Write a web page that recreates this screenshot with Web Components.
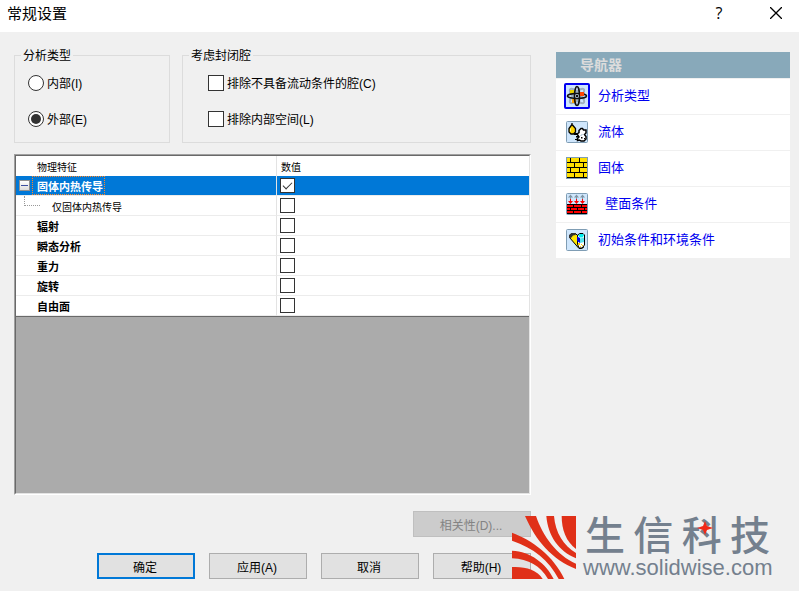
<!DOCTYPE html>
<html lang="zh-CN">
<head>
<meta charset="utf-8">
<title>常规设置</title>
<style>
    body {
        margin: 0;
        background: #f0f0f0;
        color: #000;
        font: 12px/16px "Liberation Sans", "Noto Sans CJK SC", sans-serif;
    }
</style>
</head>
<body>
<settings-dialog>
    <title-bar slot="title">常规设置</title-bar>
    <group-box slot="groups" label="分析类型">
        <choice-item type="radio" name="analysis" value="internal">内部(I)</choice-item>
        <choice-item type="radio" name="analysis" value="external" checked>外部(E)</choice-item>
    </group-box>
    <group-box slot="groups" label="考虑封闭腔" class="wide">
        <choice-item type="checkbox" name="cavities">排除不具备流动条件的腔(C)</choice-item>
        <choice-item type="checkbox" name="space">排除内部空间(L)</choice-item>
    </group-box>
    <feature-grid slot="features"></feature-grid>
    <push-button slot="extra" disabled>相关性(D)...</push-button>
    <push-button slot="actions" default>确定</push-button>
    <push-button slot="actions">应用(A)</push-button>
    <push-button slot="actions">取消</push-button>
    <push-button slot="actions">帮助(H)</push-button>
    <wizard-nav slot="nav" label="导航器">
        <nav-item icon="atom" current>分析类型</nav-item>
        <nav-item icon="fluid">流体</nav-item>
        <nav-item icon="solid">固体</nav-item>
        <nav-item icon="wall">&nbsp;&nbsp;壁面条件</nav-item>
        <nav-item icon="initial">初始条件和环境条件</nav-item>
    </wizard-nav>
    <brand-mark slot="brand"></brand-mark>
</settings-dialog>

<script>
class SettingsDialog extends HTMLElement {
    connectedCallback() {
        this.attachShadow({ mode: 'open' });
        this.shadowRoot.innerHTML = `
            <style>
                :host {
                    display: flex;
                    flex-direction: column;
                    min-height: 100vh;
                    position: relative;
                }
                main {
                    flex: 1;
                    display: grid;
                    grid-template-columns: minmax(0, 1fr) 234px;
                    gap: 25px;
                    padding: 16px 9px 12px 14px;
                }
                .form {
                    display: flex;
                    flex-direction: column;
                    gap: 16px;
                }
                .top {
                    flex: 1;
                    display: flex;
                    flex-direction: column;
                    gap: 11px;
                }
                .groups {
                    display: flex;
                    gap: 12px;
                }
                ::slotted(group-box) {
                    flex: 0 0 156px;
                }
                ::slotted(group-box.wide) {
                    flex: 1;
                }
                ::slotted(feature-grid) {
                    flex: 1;
                }
                .row {
                    display: flex;
                    justify-content: flex-end;
                    gap: 14px;
                }
                .extra {
                    --button-width: 118px;
                }
                aside {
                    padding-top: 4px;
                }
                /* the logo floats over the lower right corner */
                .brand {
                    position: absolute;
                    right: 25px;
                    bottom: 11px;
                    pointer-events: none;
                }
            </style>
            <slot name="title"></slot>
            <main>
                <div class="form">
                    <div class="top">
                        <div class="groups"><slot name="groups"></slot></div>
                        <slot name="features"></slot>
                    </div>
                    <div class="row extra"><slot name="extra"></slot></div>
                    <div class="row"><slot name="actions"></slot></div>
                </div>
                <aside><slot name="nav"></slot></aside>
            </main>
            <div class="brand"><slot name="brand"></slot></div>
        `;
    }
}
customElements.define('settings-dialog', SettingsDialog);

class TitleBar extends HTMLElement {
    connectedCallback() {
        this.attachShadow({ mode: 'open' });
        this.shadowRoot.innerHTML = `
            <style>
                :host {
                    display: flex;
                    align-items: stretch;
                    height: 32px;
                    background: #fff;
                }
                h1 {
                    flex: 1;
                    margin: 0;
                    padding-left: 7px;
                    font-size: 15px;
                    font-weight: 400;
                    line-height: 28px;
                }
                .buttons {
                    display: flex;
                    gap: 11px;
                }
                button {
                    width: 46px;
                    padding: 0 0 6px;
                    border: 0;
                    background: none;
                    color: #000;
                    font: 16px/20px "Open Sans", sans-serif;
                    display: grid;
                    place-items: center;
                }
                button:hover {
                    background: #e5e5e5;
                }
            </style>
            <h1><slot></slot></h1>
            <div class="buttons">
                <button type="button" title="帮助">?</button>
                <button type="button" aria-label="关闭">
                    <svg width="12" height="12" viewBox="0 0 12 12" stroke="#000" stroke-width="1.3">
                        <path d="M0 0l12 12M12 0l-12 12"/>
                    </svg>
                </button>
            </div>
        `;
    }
}
customElements.define('title-bar', TitleBar);

class GroupBox extends HTMLElement {
    connectedCallback() {
        this.attachShadow({ mode: 'open' });
        this.shadowRoot.innerHTML = `
            <style>
                :host {
                    display: block;
                }
                fieldset {
                    box-sizing: border-box;
                    height: 95px;
                    min-width: 0;
                    margin: 0;
                    padding: 13px 0 0 13px;
                    border: 1px solid #dcdcdc;
                }
                :host(.wide) fieldset {
                    padding-left: 25px;
                }
                legend {
                    margin-left: -7px;
                    padding: 2px 2px 0;
                    line-height: 12px;
                }
                :host(.wide) legend {
                    margin-left: -19px;
                }
                div {
                    display: flex;
                    flex-direction: column;
                    gap: 20px;
                }
            </style>
            <fieldset>
                <legend>${this.getAttribute('label')}</legend>
                <div><slot></slot></div>
            </fieldset>
        `;
    }
}
customElements.define('group-box', GroupBox);

const boxStyles = `
    input {
        appearance: none;
        box-sizing: border-box;
        flex: none;
        width: var(--box-size, 16px);
        height: var(--box-size, 16px);
        margin: 0;
        border: 1px solid #333;
        background: #fff;
        display: grid;
        place-items: center;
    }
    input[type=radio] {
        border-radius: 50%;
    }
    input[type=radio]:checked::before {
        content: "";
        width: 10px;
        height: 10px;
        border-radius: 50%;
        background: #333;
    }
    input[type=checkbox]:checked::before {
        content: "";
        width: 8px;
        height: 4px;
        margin-bottom: 3px;
        border: solid #333;
        border-width: 0 0 1px 1px;
        transform: rotate(-45deg);
    }
`;

class ChoiceItem extends HTMLElement {
    connectedCallback() {
        const type = this.getAttribute('type');
        const checked = this.hasAttribute('checked') ? 'checked' : '';
        this.attachShadow({ mode: 'open' });
        this.shadowRoot.innerHTML = `
            <style>
                :host {
                    display: block;
                }
                label {
                    display: flex;
                    align-items: center;
                    gap: 3px;
                    height: 16px;
                    white-space: nowrap;
                }
                span {
                    padding-top: 2px;
                }
                ${boxStyles}
            </style>
            <label>
                <input type="${type}" name="${this.getAttribute('name')}" ${checked}>
                <span><slot></slot></span>
            </label>
        `;
        this.input = this.shadowRoot.querySelector('input');
        // radios live in separate shadow roots, so clear the siblings by hand
        this.input.addEventListener('change', () => {
            if (type !== 'radio') return;
            this.parentElement.querySelectorAll('choice-item').forEach(item => {
                if (item !== this) item.input.checked = false;
            });
        });
    }
}
customElements.define('choice-item', ChoiceItem);

const features = [
    { name: '固体内热传导', kind: 'parent', checked: true },
    { name: '仅固体内热传导', kind: 'child' },
    { name: '辐射' },
    { name: '瞬态分析' },
    { name: '重力' },
    { name: '旋转' },
    { name: '自由面' }
];

class FeatureGrid extends HTMLElement {
    connectedCallback() {
        this.attachShadow({ mode: 'open' });
        this.shadowRoot.innerHTML = `
            <style>
                :host {
                    display: block;
                    --box-size: 15px;
                    border: 1px solid;
                    border-color: #a0a0a0 #fff #fff #a0a0a0;
                }
                .inner {
                    box-sizing: border-box;
                    height: 100%;
                    border: 1px solid;
                    border-color: #696969 #e3e3e3 #e3e3e3 #696969;
                    background: #ababab;
                }
                table {
                    width: 100%;
                    table-layout: fixed;
                    border-spacing: 0;
                    border-bottom: 1px solid #696969;
                    background: #fff;
                    font-size: 11px;
                }
                th, td {
                    box-sizing: border-box;
                    height: 20px;
                    padding: 0;
                    line-height: 16px;
                    text-align: left;
                    border-bottom: 1px solid #ececec;
                }
                th:first-child, td:first-child {
                    width: 261px;
                    border-right: 1px solid #e3e3e3;
                }
                th {
                    padding: 4px 0 0 4px;
                    font-size: 10px;
                    font-weight: 400;
                    border-bottom: 0;
                }
                th:first-child {
                    padding-left: 21px;
                }
                .cell {
                    display: flex;
                    align-items: center;
                    height: 19px;
                }
                .gutter {
                    flex: none;
                    width: 16px;
                    height: 19px;
                    display: flex;
                    align-items: center;
                }
                label {
                    padding: 4px 4px 0;
                    border: 1px solid transparent;
                    font-weight: 700;
                    line-height: 13px;
                }
                .parent td {
                    background: #0078d7;
                    color: #fff;
                }
                .parent label {
                    border: 1px dotted #ff8728;
                    padding-right: 1px;
                }
                .child label {
                    font-size: 10px;
                    font-weight: 400;
                }
                .child .gutter {
                    width: 31px;
                    align-items: flex-start;
                }
                .child .gutter::before {
                    content: "";
                    width: 15px;
                    height: 9px;
                    margin-left: 8px;
                    border: dotted #999;
                    border-width: 0 0 1px 1px;
                }
                button {
                    width: 11px;
                    height: 11px;
                    margin-left: 3px;
                    padding: 0;
                    border: 1px solid #919191;
                    background: linear-gradient(#fff, #dcdcdc);
                    display: grid;
                    place-items: center;
                }
                button::before {
                    content: "";
                    width: 7px;
                    height: 1px;
                    background: #3c4fa0;
                }
                .value {
                    padding-left: 3px;
                }
                ${boxStyles}
            </style>
            <div class="inner">
                <table>
                    <thead>
                        <tr><th>物理特征</th><th>数值</th></tr>
                    </thead>
                    <tbody>
                        ${features.map((feature, i) => this.row(feature, i)).join('')}
                    </tbody>
                </table>
            </div>
        `;
        const child = this.shadowRoot.querySelector('.child');
        this.shadowRoot.querySelector('button').addEventListener('click', () => {
            child.hidden = !child.hidden;
        });
    }

    row({ name, kind = '', checked }, i) {
        const toggle = kind === 'parent' ? '<button type="button" aria-label="折叠"></button>' : '';
        return `
            <tr class="${kind}">
                <td><div class="cell"><span class="gutter">${toggle}</span><label for="f${i}">${name}</label></div></td>
                <td><div class="cell value"><input type="checkbox" id="f${i}" ${checked ? 'checked' : ''}></div></td>
            </tr>
        `;
    }
}
customElements.define('feature-grid', FeatureGrid);

class PushButton extends HTMLElement {
    connectedCallback() {
        this.attachShadow({ mode: 'open' });
        this.shadowRoot.innerHTML = `
            <style>
                :host {
                    display: block;
                    width: var(--button-width, 98px);
                }
                button {
                    width: 100%;
                    height: 26px;
                    padding: 3px 2px 0 0;
                    border: 1px solid #adadad;
                    background: #e1e1e1;
                    color: #000;
                    font: inherit;
                }
                button:hover {
                    border-color: #0078d7;
                    background: #e5f1fb;
                }
                :host([default]) button {
                    border: 2px solid #0078d7;
                }
                button:disabled {
                    border-color: #bfbfbf;
                    background: #ccc;
                    color: #838383;
                }
            </style>
            <button type="button" ${this.hasAttribute('disabled') ? 'disabled' : ''}><slot></slot></button>
        `;
    }
}
customElements.define('push-button', PushButton);

class WizardNav extends HTMLElement {
    connectedCallback() {
        this.attachShadow({ mode: 'open' });
        this.shadowRoot.innerHTML = `
            <style>
                :host {
                    display: block;
                }
                nav {
                    display: flex;
                    flex-direction: column;
                    gap: 1px;
                }
                h2 {
                    margin: 0;
                    padding-left: 24px;
                    background: #88a9ba;
                    color: #dcdcdc;
                    font-size: 14px;
                    line-height: 26px;
                }
            </style>
            <nav>
                <h2>${this.getAttribute('label')}</h2>
                <slot></slot>
            </nav>
        `;
    }
}
customElements.define('wizard-nav', WizardNav);

const frame = '<rect x=".5" y=".5" width="21" height="21" rx="1" fill="#cfe6fc" stroke="#7f9db4"/>';

const icons = {
    atom: `
        <rect width="22" height="22" fill="#cfe6fc"/>
        <g fill="none" stroke="#9fb0c0" stroke-width="2">
            <ellipse cx="11" cy="11" rx="9.5" ry="3.5" transform="rotate(45 11 11)"/>
            <ellipse cx="11" cy="11" rx="9.5" ry="3.5" transform="rotate(-45 11 11)"/>
        </g>
        <path fill="#e8d000" d="M4 5h4v4H4z"/>
        <path fill="#ffa000" d="M6 14h4v4H6z"/>
        <g fill="none" stroke="#111" stroke-width="1.6">
            <ellipse cx="11" cy="11" rx="9.5" ry="2.5"/>
            <ellipse cx="11" cy="11" rx="2.5" ry="9.5"/>
        </g>
        <path fill="#ff4500" d="M14 7h4v4h-4z"/>
        <path fill="#111" d="M10 10h2v2h-2z"/>`,
    fluid: `${frame}
        <path d="M6 2v1.500L3 7.500v3.500l2 2h2.500l2-2V7.500L6.500 4" fill="#ffd500" stroke="#000" stroke-width="1.3"/>
        <path d="M4.500 7.500v3" fill="none" stroke="#fff38a"/>
        <path d="M11 13l2-1.500V9.500l2-2h1.500l1 1.500h2.500v3l-1.500 1.500 1.500 2v2.500l-2 2h-3l-1.500-1-2 .5v-2l1.500-1.500z" fill="#fff" stroke="#000" stroke-width="1.5"/>
        <path d="M8 12h3v2H8zM10 15h3v1.500h-3zM9 18h2v1H9zM15 16h1.500v1.500H15zM18 17h1v1h-1z"/>
        <path d="M16.500 13.500l-2 1" stroke="#8fb0c8"/>`,
    solid: `
        <rect x=".5" y=".5" width="21" height="21" fill="#ffdf00" stroke="#7f9db4"/>
        <path d="M1 5.500h20M1 10.500h20M1 15.500h20M1 20.500h20M4.500 1v4M13.500 1v4M8.500 6v4M17.500 6v4M4.500 11v4M13.500 11v4M8.500 16v4M17.500 16v4" stroke="#000" shape-rendering="crispEdges"/>`,
    wall: `${frame}
        <path d="M4.500 2v4M10.500 2v4M16.500 2v4" stroke="#7f95a5"/>
        <path d="M2 4.500l2.500-3 2.500 3zM8 4.500l2.500-3 2.500 3zM14 4.500l2.500-3 2.500 3z" fill="#7f95a5"/>
        <path d="M4.500 6v3M10.500 6v3M16.500 6v3" stroke="red"/>
        <path d="M2 8h5l-2.500 3zM8 8h5l-2.500 3zM14 8h5l-2.500 3z" fill="red"/>
        <path fill="red" d="M1 12h20v9H1z"/>
        <path d="M1 11.500h20M1 14.500h20M1 17.500h20M1 20.500h20M7.500 12v2M15.500 12v2M4.500 15v2M11.500 15v2M18.500 15v2M7.500 18v2M15.500 18v2" stroke="#000" shape-rendering="crispEdges"/>`,
    initial: `${frame}
        <path d="M3.500 8.500l2-4h4l8 8v6l-2 1H13z" fill="#ffe600" stroke="#000"/>
        <path d="M3 8.500V6l2.500-2H9l1 2-3 .5L5 9z" fill="#333"/>
        <path d="M11.500 6l2.500-1.500h3l1.500 1.500v10l-2.500 3h-3l-1.500-4z" fill="#fff" stroke="#000"/>
        <path d="M12 6.500l2-1.500h3l1 1.500-1.500 2H14z" fill="#00f0f0"/>
        <path d="M11 7.500l3 1.500v5l-3-2z" fill="#0000e0"/>
        <path d="M14 9.500l4-1V13l-4 1z" fill="#59e3ee"/>
        <path d="M12 14h2v2h-2zM15 15h1v1h-1zM14 17h1v1h-1zM16 16h1v1h-1z" fill="#ffd000"/>`
};

class NavItem extends HTMLElement {
    connectedCallback() {
        this.attachShadow({ mode: 'open' });
        this.shadowRoot.innerHTML = `
            <style>
                :host {
                    display: block;
                    background: #fff;
                }
                a {
                    display: flex;
                    align-items: center;
                    gap: 8px;
                    height: 34px;
                    padding: 0 0 1px 8px;
                    color: #0000f0;
                    font-size: 13px;
                    text-decoration: none;
                }
                a:hover span {
                    text-decoration: underline;
                }
                svg {
                    display: block;
                    border: 2px solid transparent;
                    border-radius: 2px;
                }
                :host([current]) svg {
                    border-color: #0000f0;
                }
            </style>
            <a href="#${this.getAttribute('icon')}">
                <svg width="22" height="22" viewBox="0 0 22 22">${icons[this.getAttribute('icon')]}</svg>
                <span><slot></slot></span>
            </a>
        `;
    }
}
customElements.define('nav-item', NavItem);

class BrandMark extends HTMLElement {
    connectedCallback() {
        this.attachShadow({ mode: 'open' });
        this.shadowRoot.innerHTML = `
            <style>
                :host {
                    display: flex;
                    gap: 7px;
                    color: #74808e;
                }
                .logo {
                    display: block;
                }
                .text {
                    position: relative;
                    width: 191px;
                }
                .name {
                    display: flex;
                    justify-content: space-between;
                    padding: 0 4px 0 2px;
                    font-size: 40px;
                    font-weight: 500;
                    line-height: 40px;
                }
                .url {
                    font-size: 22px;
                    line-height: 24px;
                }
                .star {
                    position: absolute;
                    left: 114px;
                    top: 5px;
                }
            </style>
            <svg class="logo" width="64" height="63" viewBox="0 0 192 189" fill="#e03018">
                <path d="M149 0H192V99C162 76 149 42 149 0z"/>
                <path d="M103 0H126C130 50 155 90 192 111V127C140 105 108 60 103 0z"/>
                <path d="M39 0H72C92 60 135 118 192 143V159C120 130 72 75 39 0z"/>
                <path d="M0 50C60 72 125 120 157 189H140C110 132 65 96 0 74z"/>
                <path d="M0 104C55 106 103 143 125 189H108C85 150 50 129 0 127z"/>
                <path d="M0 153C38 151 75 160 92 189H0z"/>
            </svg>
            <div class="text">
                <div class="name"><span>生</span><span>信</span><span>科</span><span>技</span></div>
                <div class="url">www.solidwise.com</div>
                <svg class="star" width="16" height="14" viewBox="0 0 16 14">
                    <path d="M8 0l2 5 6 2-6 2-2 5-2-5-6-2 6-2z" fill="#f02818"/>
                </svg>
            </div>
        `;
    }
}
customElements.define('brand-mark', BrandMark);
</script>
</body>
</html>
